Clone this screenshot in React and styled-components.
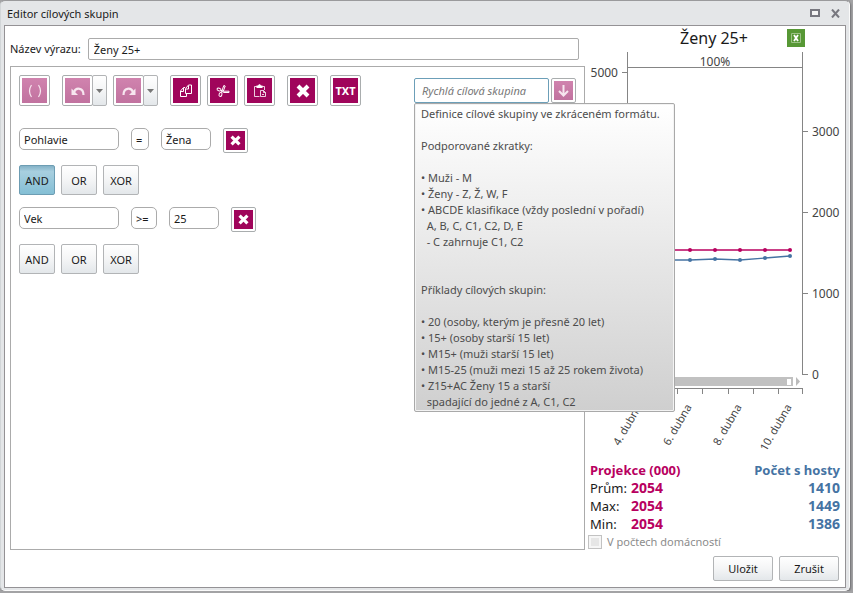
import React, { useState } from "react";
import styled, { createGlobalStyle, css } from "styled-components";

const BRAND = "#a0055b";
const PINK = "#b8005f";
const BLUE = "#4573a3";

const GlobalStyle = createGlobalStyle`
  * { box-sizing: border-box; }
  body {
    margin: 0;
    background: #a3a3a5;
    color: #1a1a1a;
    font: 11px/16px "Noto Sans", "Open Sans", sans-serif;
  }
  button, input { font: inherit; color: inherit; margin: 0; }
`;

const Window = styled.main`
  display: flex;
  flex-direction: column;
  min-height: calc(100vh - 3px);
  margin-right: 3px;
  background: #e4e6e8;
  border: 1px solid #fafafa;
  border-top-color: #9a9a9c;
  border-left-color: #d2d6d8;
  border-radius: 5px;
  box-shadow: 1px 1px 2px #6f6f72;
`;

const TitleBar = styled.header`
  display: flex;
  align-items: center;
  height: 24px;
  padding: 0 4px 0 6px;
`;

const Title = styled.h1`
  flex: 1;
  margin: 0;
  padding-top: 2px;
  font-size: 11px;
  font-weight: 400;
`;

const WindowButton = styled.button`
  display: flex;
  align-items: center;
  justify-content: center;
  width: 20px;
  height: 20px;
  padding: 0;
  border: 0;
  background: none;
`;

const Panel = styled.div`
  flex: 1;
  display: flex;
  flex-direction: column;
  margin: 0 3px 2px;
  background: #fff;
  border: 1px solid #949295;
`;

const Columns = styled.div`
  flex: 1;
  display: grid;
  grid-template-columns: minmax(0, 1fr) 260px;
`;

const EditorColumn = styled.section`
  display: flex;
  flex-direction: column;
  padding: 12px 0 0 5px;
`;

const NameRow = styled.div`
  display: flex;
  align-items: center;
  gap: 7px;
  margin: 0 6px 6px 0;
`;

const TextBox = styled.input`
  min-width: 0;
  height: 22px;
  padding: 0 4px;
  border: 1px solid #ababab;
  border-radius: ${(p) => (p.$round ? 5 : 2)}px;
  background: #fff;
  outline: 0;
  ${(p) => (p.$width ? css`width: ${p.$width}px;` : css`flex: 1; padding: 0 5px;`)}
`;

const ExpressionBox = styled.div`
  flex: 1;
  padding: 8px;
  border: 1px solid #ababab;
`;

const Toolbar = styled.div`
  display: flex;
  align-items: center;
  gap: 12px;
  margin-bottom: 22px;
`;

const Group = styled.div`
  display: flex;
  gap: 6px;
`;

const raised = css`
  border: 1px solid #b2b4b6;
  border-radius: 2px;
  background: linear-gradient(#fff, #f4f5f6 50%, #e3e7ea);
`;

const IconButton = styled.button`
  display: flex;
  flex: none;
  width: ${(p) => p.$size}px;
  height: ${(p) => p.$size}px;
  padding: 2px;
  border: 1px solid #a9adae;
  border-radius: 2px;
  background: #fff;
`;

const IconFace = styled.span`
  flex: 1;
  display: flex;
  align-items: center;
  justify-content: center;
  color: ${(p) => (p.$dim ? "#f7e6ef" : "#fff")};
  background: ${(p) => (p.$dim ? "linear-gradient(#d083ae, #c1729f)" : BRAND)};
  font-size: 11px;
  font-weight: 700;
`;

const Split = styled.div`
  display: flex;
`;

const SplitArrow = styled.button`
  ${raised}
  display: flex;
  align-items: center;
  justify-content: center;
  width: 15px;
  margin-left: -1px;
  padding: 0;
`;

const QuickGroup = styled.div`
  position: relative;
  display: flex;
  gap: 2px;
  margin-left: auto;
`;

const QuickInput = styled.input`
  width: 135px;
  height: 25px;
  padding: 0 7px;
  border: 1px solid #6c9fb8;
  border-radius: 2px;
  background: #fff;
  outline: 0;
  &::placeholder { color: #777; font-style: italic; opacity: 1; }
`;

const Tooltip = styled.div`
  position: absolute;
  z-index: 2;
  top: 100%;
  left: 0;
  padding: 2px 6px 1px;
  border: 1px solid #a9a9a9;
  border-radius: 2px;
  background: linear-gradient(#fff, #cfcfcf);
  box-shadow: inset 0 0 0 1px #f3f3f3;
  color: #4c4c4c;
  width: 261px;
  white-space: pre;
`;

const Rules = styled.div`
  display: flex;
  flex-direction: column;
  gap: 12px;
`;

const RuleRow = styled.div`
  display: flex;
  align-items: flex-start;
  gap: 12px;
  height: 25px;
`;

const LogicButton = styled.button`
  ${raised}
  width: 36px;
  height: 30px;
  padding: 1px 0 0;
  ${(p) =>
    p.$active &&
    css`
      border-color: #6d9db3;
      background: linear-gradient(#84b2c7, #a8cfdf 20%, #84bfd5);
    `}
`;

const ResultColumn = styled.aside`
  display: flex;
  flex-direction: column;
  padding-left: 1px;
`;

const ChartHeader = styled.div`
  display: grid;
  grid-template-columns: 1fr 18px;
  align-items: center;
  height: 24px;
  margin-bottom: 2px;
  padding-right: 40px;
`;

const ChartTitle = styled.h2`
  margin: 0;
  padding-left: 55px;
  text-align: center;
  font-size: 16px;
  line-height: 22px;
  font-weight: 400;
`;

const ExcelButton = styled.button`
  display: flex;
  width: 18px;
  height: 18px;
  padding: 0;
  border: 0;
  background: #579835;
`;

const Chart = styled.svg`
  display: block;
  width: 259px;
  height: 400px;
  margin-bottom: 9px;
  font-size: 12px;
  fill: #444;
`;

const DayLabel = styled.text`
  font-size: 11px;
  text-anchor: end;
`;

const Stats = styled.table`
  width: 250px;
  margin-left: 4px;
  border-collapse: collapse;
  font-size: 13px;
  line-height: 18px;
  th, td { padding: 0; text-align: left; font-weight: 400; }
`;

const Value = styled.td`
  && {
    color: ${(p) => (p.$guest ? BLUE : PINK)};
    font-size: 14px;
    font-weight: 700;
    text-align: ${(p) => (p.$guest ? "right" : "left")};
  }
`;

const StatHead = styled(Value).attrs({ as: "th", scope: "col" })`
  && { font-size: 13px; }
`;

const CheckRow = styled.label`
  display: flex;
  align-items: center;
  gap: 5px;
  height: 17px;
  margin-left: 2px;
  color: #8c8c8c;
`;

const Check = styled.input`
  appearance: none;
  width: 14px;
  height: 14px;
  border: 1px solid #c2c2c2;
  background: #e6e6e6;
  box-shadow: inset 0 0 0 2px #f6f6f6;
`;

const Footer = styled.footer`
  display: flex;
  justify-content: flex-end;
  gap: 6px;
  padding: 6px;
`;

const ActionButton = styled.button`
  ${raised}
  width: 60px;
  height: 25px;
  padding: 0;
`;

const Parens = () => (
  <svg width="16" height="16" viewBox="0 0 16 16" fill="none" stroke="currentColor" strokeWidth="1.2">
    <path d="M4.500 2Q.5 8 4.500 14M11.500 2Q15.500 8 11.500 14" />
  </svg>
);
const Turn = ({ forward }) => (
  <svg width="16" height="16" viewBox="0 0 16 16" fill="none" stroke="currentColor" strokeWidth="2.200">
    <g transform={forward ? "translate(16 0) scale(-1 1)" : undefined}>
      <path d="M4 9C6 4 13.500 4.500 13.500 12" />
      <path d="M1.500 5.500v6.500H8Z" fill="currentColor" stroke="none" />
    </g>
  </svg>
);
const Copy = () => (
  <svg width="16" height="16" viewBox="0 0 16 16" fill="none" stroke="currentColor">
    <path d="M7.500 10.500V5.500l3-3.500h3v8.500ZM10.500 2.500v3.500H8" />
    <path d="M7 4.500H5.500l-3 3.500v5.500h6v-3M5.500 5v3.500H3" />
  </svg>
);
const Cut = () => (
  <svg width="16" height="16" viewBox="0 0 16 16" fill="none" stroke="currentColor">
    <ellipse cx="4" cy="6.500" rx="2" ry="1.400" transform="rotate(15 4 6.500)" />
    <ellipse cx="5.500" cy="11.500" rx="1.400" ry="2" transform="rotate(20 5.500 11.500)" />
    <path d="M5.800 7.200 8 8.200h6v1.300H8.500L7 8.500M6.200 9.800 8.800 2.500l1.400.5L8.200 8.500" />
  </svg>
);
const Paste = () => (
  <svg width="16" height="16" viewBox="0 0 16 16" fill="none" stroke="currentColor" strokeWidth="1">
    <path d="M7.500 13.500h-5v-10h10V7M8.500 7.500h3l2 2v4h-5ZM11.500 7.500v2h2" strokeOpacity=".8" />
    <path d="M4.500 5V2.500h1.500L7 1.200h1L9 2.500h1.500V5Z" fill="currentColor" stroke="none" />
    <path d="M10 11.500h2" strokeOpacity=".8" />
  </svg>
);
const Cross = ({ size }) => (
  <svg width={size} height={size} viewBox="0 0 14 14" stroke="currentColor" strokeWidth="4">
    <path d="M2 2l10 10M12 2L2 12" />
  </svg>
);
const Down = () => (
  <svg width="15" height="15" viewBox="0 0 15 15" fill="none" stroke="currentColor" strokeWidth="2">
    <path d="M7.500 2v10M3 8l4.500 4.500L12 8" />
  </svg>
);
const Caret = () => (
  <svg width="7" height="4" viewBox="0 0 7 4" fill="#777"><path d="M0 0h7L3.500 4Z" /></svg>
);

function Tool({ label, size = 31, dim, children }) {
  return (
    <IconButton type="button" aria-label={label} $size={size}>
      <IconFace $dim={dim}>{children}</IconFace>
    </IconButton>
  );
}

function Rule({ field, operator, opWidth, value }) {
  return (
    <RuleRow>
      <TextBox $round $width={100} aria-label="Proměnná" defaultValue={field} />
      <TextBox $round $width={opWidth} aria-label="Operátor" defaultValue={operator} />
      <TextBox $round $width={50} aria-label="Hodnota" defaultValue={value} />
      <Tool label="Odstranit" size={25}><Cross size={11} /></Tool>
    </RuleRow>
  );
}

function Logic({ initial }) {
  const [active, setActive] = useState(initial);
  return (
    <Group>
      {["AND", "OR", "XOR"].map((op) => (
        <LogicButton key={op} type="button" $active={op === active} aria-pressed={op === active} onClick={() => setActive(op)}>
          {op}
        </LogicButton>
      ))}
    </Group>
  );
}

const HELP = `Definice cílové skupiny ve zkráceném formátu.

Podporované zkratky:

• Muži - M
• Ženy - Z, Ž, W, F
• ABCDE klasifikace (vždy poslední v pořadí)
  A, B, C, C1, C2, D, E
  - C zahrnuje C1, C2


Příklady cílových skupin:

• 20 (osoby, kterým je přesně 20 let)
• 15+ (osoby starší 15 let)
• M15+ (muži starší 15 let)
• M15-25 (muži mezi 15 až 25 rokem života)
• Z15+AC Ženy 15 a starší
  spadající do jedné z A, C1, C2`;

const DAYS = [54, 79, 104, 129, 154, 179, 204];
const GUESTS = [209, 208, 208, 207, 208, 206, 204];
const PROJECTION = DAYS.map(() => 198);

function Series({ values, color }) {
  return (
    <g fill={color}>
      <polyline points={DAYS.map((x, i) => `${x},${values[i]}`).join(" ")} fill="none" stroke={color} strokeWidth="1.300" />
      {DAYS.map((x, i) => <circle key={x} cx={x} cy={values[i]} r="2" />)}
    </g>
  );
}

function AudienceChart() {
  return (
    <Chart viewBox="0 0 259 400" role="img" aria-label="Ženy 25+">
      <g fill="none" stroke="#858585" shapeRendering="crispEdges">
        <path d="M41.500 0v322M216.500 0v322M41 15.500h175M36 20.500h5M41 336.500h176" />
        <path d="M216 79.500h6M216 160.500h6M216 241.500h6M216 322.500h6" />
        <path d="M41.500 337v5M66.500 337v5M91.500 337v5M116.500 337v5M142.500 337v5M167.500 337v5M192.500 337v5M216.500 337v5" />
      </g>
      <text x="129" y="14" textAnchor="middle">100%</text>
      <text x="32" y="25" textAnchor="end">5000</text>
      {[3000, 2000, 1000, 0].map((n, i) => <text key={n} x="226" y={84 + i * 81}>{n}</text>)}
      <rect x="41" y="325" width="166" height="9" fill="#c1c1c1" />
      <rect x="201" y="327" width="4" height="6" fill="#fff" />
      <path d="M210 325l4 4.500-4 4.500Z" fill="#bbb" />
      <Series values={PROJECTION} color={PINK} />
      <Series values={GUESTS} color={BLUE} />
      {[4, 6, 8, 10].map((day, i) => (
        <DayLabel key={day} transform={`translate(${56 + i * 50} 355) rotate(-60)`}>{day}. dubna</DayLabel>
      ))}
    </Chart>
  );
}

export default function App() {
  return (
    <>
      <GlobalStyle />
      <Window>
        <TitleBar>
          <Title>Editor cílových skupin</Title>
          <WindowButton type="button" aria-label="Maximalizovat">
            <svg width="10" height="8" viewBox="0 0 10 8"><path d="M1 1h8v6H1Z" fill="#f4f4f4" stroke="#77777f" strokeWidth="2" /></svg>
          </WindowButton>
          <WindowButton type="button" aria-label="Zavřít">
            <svg width="9" height="9" viewBox="0 0 9 9" stroke="#77777f" strokeWidth="2"><path d="M1 .5l7 8M8 .5l-7 8" /></svg>
          </WindowButton>
        </TitleBar>
        <Panel>
          <Columns>
            <EditorColumn>
              <NameRow>
                <label htmlFor="expression-name">Název výrazu:</label>
                <TextBox id="expression-name" defaultValue="Ženy 25+" />
              </NameRow>
              <ExpressionBox>
                <Toolbar>
                  <Tool label="Závorky" dim><Parens /></Tool>
                  <Group>
                    <Split>
                      <Tool label="Zpět" dim><Turn /></Tool>
                      <SplitArrow type="button" aria-label="Historie zpět"><Caret /></SplitArrow>
                    </Split>
                    <Split>
                      <Tool label="Znovu" dim><Turn forward /></Tool>
                      <SplitArrow type="button" aria-label="Historie znovu"><Caret /></SplitArrow>
                    </Split>
                  </Group>
                  <Group>
                    <Tool label="Kopírovat"><Copy /></Tool>
                    <Tool label="Vyjmout"><Cut /></Tool>
                    <Tool label="Vložit"><Paste /></Tool>
                  </Group>
                  <Tool label="Smazat"><Cross size={14} /></Tool>
                  <Tool label="Text">TXT</Tool>
                  <QuickGroup>
                    <QuickInput aria-label="Rychlá cílová skupina" aria-describedby="quick-help" placeholder="Rychlá cílová skupina" />
                    <Tool label="Přidat" size={25} dim><Down /></Tool>
                    <Tooltip role="tooltip" id="quick-help">{HELP}</Tooltip>
                  </QuickGroup>
                </Toolbar>
                <Rules>
                  <Rule field="Pohlavie" operator="=" opWidth={18} value="Žena" />
                  <Logic initial="AND" />
                  <Rule field="Vek" operator=">=" opWidth={26} value="25" />
                  <Logic />
                </Rules>
              </ExpressionBox>
            </EditorColumn>
            <ResultColumn>
              <ChartHeader>
                <ChartTitle>Ženy 25+</ChartTitle>
                <ExcelButton type="button" aria-label="Export do Excelu">
                  <svg width="18" height="18" viewBox="0 0 18 18" fill="none" stroke="#fff">
                    <path d="M4.500 4.500h9v9h-9Z" stroke="#9cc287" />
                    <path d="M7 6l4 6M11 6l-4 6" strokeWidth="1.800" />
                  </svg>
                </ExcelButton>
              </ChartHeader>
              <AudienceChart />
              <Stats>
                <thead>
                  <tr><StatHead colSpan={2}>Projekce (000)</StatHead><StatHead $guest>Počet s hosty</StatHead></tr>
                </thead>
                <tbody>
                  {[["Prům:", 2054, 1410], ["Max:", 2054, 1449], ["Min:", 2054, 1386]].map(([name, own, guest]) => (
                    <tr key={name}><th scope="row" width="41">{name}</th><Value>{own}</Value><Value $guest>{guest}</Value></tr>
                  ))}
                </tbody>
              </Stats>
              <CheckRow><Check type="checkbox" disabled />V počtech domácností</CheckRow>
            </ResultColumn>
          </Columns>
          <Footer>
            <ActionButton type="button">Uložit</ActionButton>
            <ActionButton type="button">Zrušit</ActionButton>
          </Footer>
        </Panel>
      </Window>
    </>
  );
}
